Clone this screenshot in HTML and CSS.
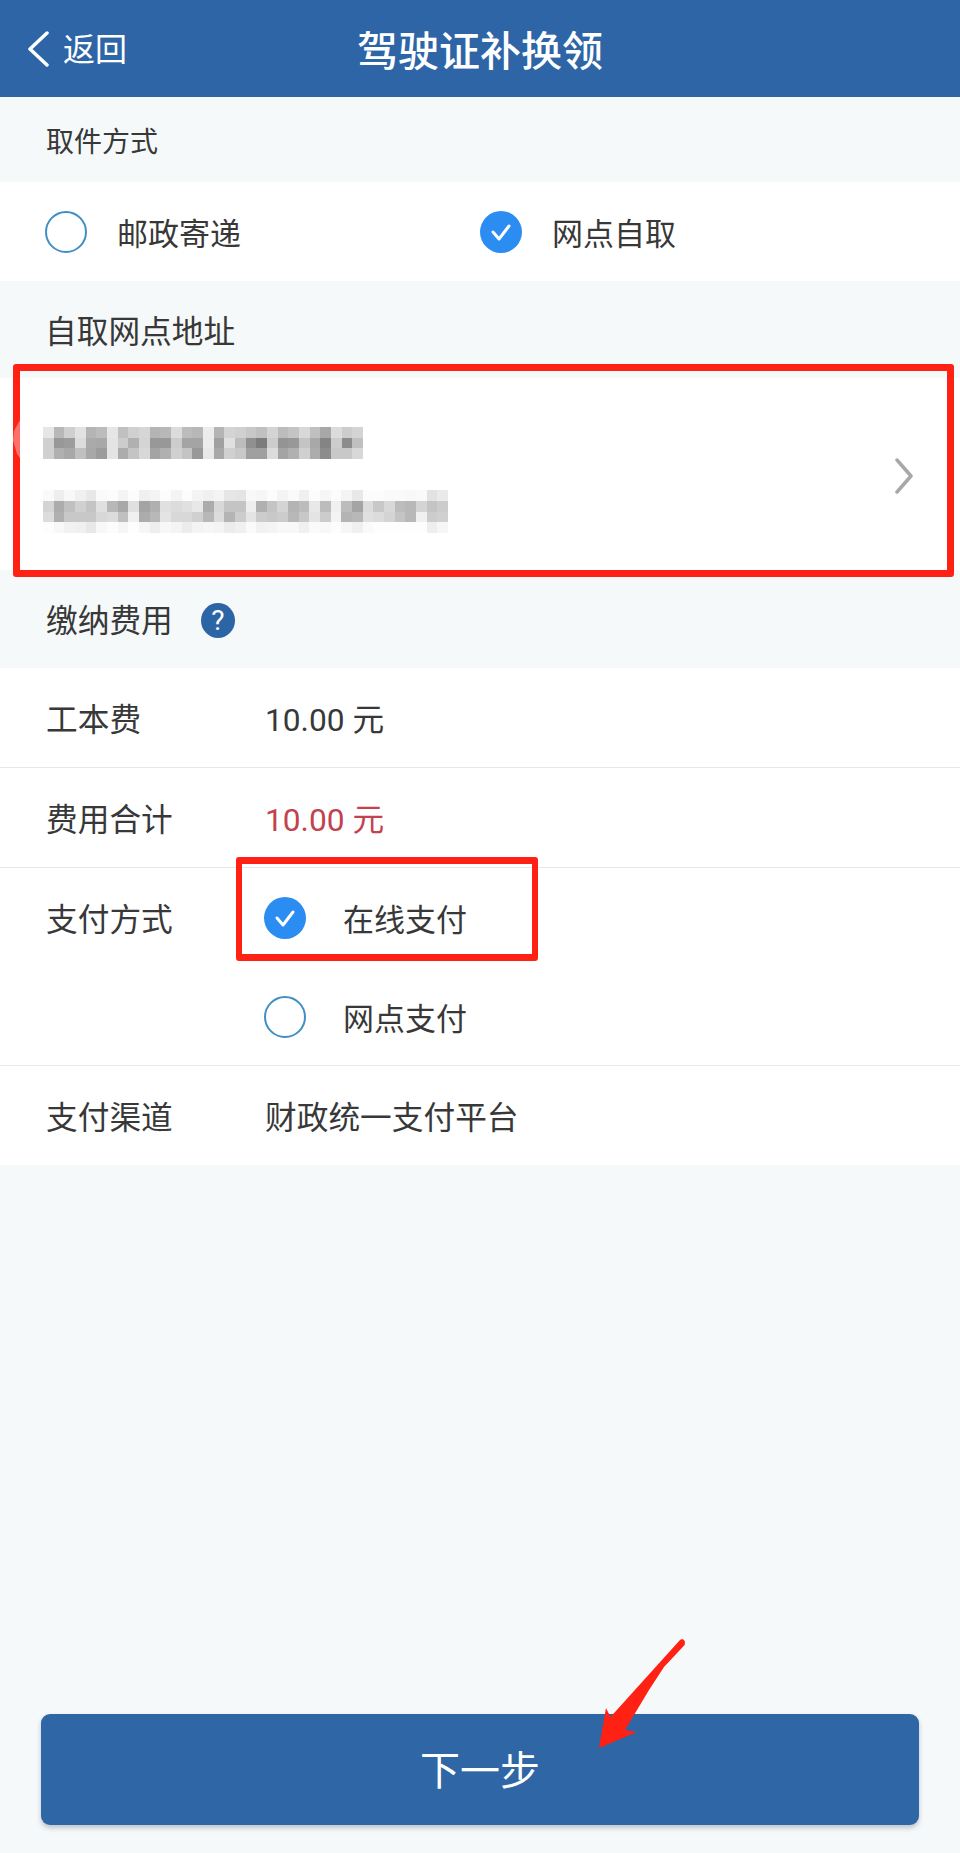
FILE: index.html
```html
<!DOCTYPE html>
<html lang="zh-CN">
<head>
<meta charset="utf-8">
<title>驾驶证补换领</title>
<link rel="stylesheet" href="styles.css">
</head>
<body>
<div class="page">
  <header class="topbar">
    <div class="back">
      <svg class="back-icon" viewBox="0 0 22 36"><path d="M20 2 3 18l17 16"/></svg>
      <span>返回</span>
    </div>
    <h1 class="title">驾驶证补换领</h1>
  </header>

  <div class="label label-pick"><span class="small">取件方式</span></div>
  <div class="pick-row">
    <div class="option pick-option">
      <span class="radio"></span><span>邮政寄递</span>
    </div>
    <div class="option pick-option">
      <span class="radio checked"><svg viewBox="0 0 42 42"><path d="M13 21l6 7 10-13"/></svg></span><span>网点自取</span>
    </div>
  </div>

  <div class="label label-addr"><span>自取网点地址</span></div>
  <div class="address">
    <div class="mosaic-col">
      <svg class="mosaic m1" viewBox="0 0 30 3">
        <rect x="0" y="0" fill="#e6e6e6"/><rect x="1" y="0" fill="#b8b8b8"/><rect x="2" y="0" fill="#cfcfcf"/><rect x="3" y="0" fill="#e2e2e2"/><rect x="4" y="0" fill="#b4b4b4"/><rect x="5" y="0" fill="#bcbcbc"/><rect x="6" y="0" fill="#e6e6e6"/><rect x="7" y="0" fill="#c0c0c0"/><rect x="8" y="0" fill="#d0d0d0"/><rect x="9" y="0" fill="#d6d6d6"/><rect x="10" y="0" fill="#b4b4b4"/><rect x="11" y="0" fill="#b8b8b8"/><rect x="12" y="0" fill="#dcdcdc"/><rect x="13" y="0" fill="#bcbcbc"/><rect x="14" y="0" fill="#b8b8b8"/><rect x="15" y="0" fill="#ececec"/><rect x="16" y="0" fill="#b4b4b4"/><rect x="17" y="0" fill="#d4d4d4"/><rect x="18" y="0" fill="#d0d0d0"/><rect x="19" y="0" fill="#c8c8c8"/><rect x="20" y="0" fill="#c0c0c0"/><rect x="21" y="0" fill="#d4d4d4"/><rect x="22" y="0" fill="#bcbcbc"/><rect x="23" y="0" fill="#c4c4c4"/><rect x="24" y="0" fill="#d8d8d8"/><rect x="25" y="0" fill="#c0c0c0"/><rect x="26" y="0" fill="#a8a8a8"/><rect x="27" y="0" fill="#dcdcdc"/><rect x="28" y="0" fill="#cccccc"/><rect x="29" y="0" fill="#d4d4d4"/>
        <rect x="0" y="1" fill="#d0d0d0"/><rect x="1" y="1" fill="#989898"/><rect x="2" y="1" fill="#9c9c9c"/><rect x="3" y="1" fill="#dcdcdc"/><rect x="4" y="1" fill="#aaaaaa"/><rect x="5" y="1" fill="#a8a8a8"/><rect x="6" y="1" fill="#e4e4e4"/><rect x="7" y="1" fill="#cccccc"/><rect x="8" y="1" fill="#b0b0b0"/><rect x="9" y="1" fill="#d4d4d4"/><rect x="10" y="1" fill="#989898"/><rect x="11" y="1" fill="#989898"/><rect x="12" y="1" fill="#cccccc"/><rect x="13" y="1" fill="#a4a4a4"/><rect x="14" y="1" fill="#a4a4a4"/><rect x="15" y="1" fill="#ececec"/><rect x="16" y="1" fill="#a0a0a0"/><rect x="17" y="1" fill="#e0e0e0"/><rect x="18" y="1" fill="#bcbcbc"/><rect x="19" y="1" fill="#909090"/><rect x="20" y="1" fill="#7c7c7c"/><rect x="21" y="1" fill="#cccccc"/><rect x="22" y="1" fill="#949494"/><rect x="23" y="1" fill="#989898"/><rect x="24" y="1" fill="#c4c4c4"/><rect x="25" y="1" fill="#a8a8a8"/><rect x="26" y="1" fill="#848484"/><rect x="27" y="1" fill="#cccccc"/><rect x="28" y="1" fill="#8c8c8c"/><rect x="29" y="1" fill="#c0c0c0"/>
        <rect x="0" y="2" fill="#d0d0d0"/><rect x="1" y="2" fill="#b0b0b0"/><rect x="2" y="2" fill="#a8a8a8"/><rect x="3" y="2" fill="#c0c0c0"/><rect x="4" y="2" fill="#a8a8a8"/><rect x="5" y="2" fill="#9c9c9c"/><rect x="6" y="2" fill="#e4e4e4"/><rect x="7" y="2" fill="#acacac"/><rect x="8" y="2" fill="#c4c4c4"/><rect x="9" y="2" fill="#d8d8d8"/><rect x="10" y="2" fill="#a4a4a4"/><rect x="11" y="2" fill="#b0b0b0"/><rect x="12" y="2" fill="#d0d0d0"/><rect x="13" y="2" fill="#c4c4c4"/><rect x="14" y="2" fill="#989898"/><rect x="15" y="2" fill="#e8e8e8"/><rect x="16" y="2" fill="#a8a8a8"/><rect x="17" y="2" fill="#d0d0d0"/><rect x="18" y="2" fill="#c8c8c8"/><rect x="19" y="2" fill="#a0a0a0"/><rect x="20" y="2" fill="#a0a0a0"/><rect x="21" y="2" fill="#dcdcdc"/><rect x="22" y="2" fill="#a4a4a4"/><rect x="23" y="2" fill="#b0b0b0"/><rect x="24" y="2" fill="#d0d0d0"/><rect x="25" y="2" fill="#acacac"/><rect x="26" y="2" fill="#8c8c8c"/><rect x="27" y="2" fill="#c8c8c8"/><rect x="28" y="2" fill="#c8c8c8"/><rect x="29" y="2" fill="#d8d8d8"/>
      </svg>
      <svg class="mosaic m2" viewBox="0 0 38 4">
        <rect x="0" y="0" fill="#fafafa"/><rect x="1" y="0" fill="#eeeeee"/><rect x="2" y="0" fill="#f8f8f8"/><rect x="3" y="0" fill="#f0f0f0"/><rect x="4" y="0" fill="#e8e8e8"/><rect x="5" y="0" fill="#fafafa"/><rect x="6" y="0" fill="#fcfcfc"/><rect x="7" y="0" fill="#f4f4f4"/><rect x="8" y="0" fill="#fcfcfc"/><rect x="9" y="0" fill="#f0f0f0"/><rect x="10" y="0" fill="#f4f4f4"/><rect x="11" y="0" fill="#fcfcfc"/><rect x="12" y="0" fill="#f4f4f4"/><rect x="13" y="0" fill="#fcfcfc"/><rect x="14" y="0" fill="#f4f4f4"/><rect x="15" y="0" fill="#f0f0f0"/><rect x="16" y="0" fill="#f4f4f4"/><rect x="17" y="0" fill="#e6e6e6"/><rect x="18" y="0" fill="#e4e4e4"/><rect x="19" y="0" fill="#f8f8f8"/><rect x="20" y="0" fill="#f6f6f6"/><rect x="21" y="0" fill="#fcfcfc"/><rect x="22" y="0" fill="#f4f4f4"/><rect x="23" y="0" fill="#fafafa"/><rect x="24" y="0" fill="#f0f0f0"/><rect x="25" y="0" fill="#fcfcfc"/><rect x="26" y="0" fill="#f6f6f6"/><rect x="27" y="0" fill="#fcfcfc"/><rect x="28" y="0" fill="#f4f4f4"/><rect x="29" y="0" fill="#e8e8e8"/><rect x="30" y="0" fill="#fcfcfc"/><rect x="31" y="0" fill="#fcfcfc"/><rect x="32" y="0" fill="#fafafa"/><rect x="33" y="0" fill="#fafafa"/><rect x="34" y="0" fill="#f8f8f8"/><rect x="35" y="0" fill="#fafafa"/><rect x="36" y="0" fill="#e2e2e2"/><rect x="37" y="0" fill="#eaeaea"/>
        <rect x="0" y="1" fill="#d4d4d4"/><rect x="1" y="1" fill="#acacac"/><rect x="2" y="1" fill="#c0c0c0"/><rect x="3" y="1" fill="#d0d0d0"/><rect x="4" y="1" fill="#c4c4c4"/><rect x="5" y="1" fill="#e0e0e0"/><rect x="6" y="1" fill="#b8b8b8"/><rect x="7" y="1" fill="#a8a8a8"/><rect x="8" y="1" fill="#e0e0e0"/><rect x="9" y="1" fill="#a4a4a4"/><rect x="10" y="1" fill="#b0b0b0"/><rect x="11" y="1" fill="#e0e0e0"/><rect x="12" y="1" fill="#dcdcdc"/><rect x="13" y="1" fill="#e0e0e0"/><rect x="14" y="1" fill="#e8e8e8"/><rect x="15" y="1" fill="#acacac"/><rect x="16" y="1" fill="#d8d8d8"/><rect x="17" y="1" fill="#c4c4c4"/><rect x="18" y="1" fill="#c4c4c4"/><rect x="19" y="1" fill="#eeeeee"/><rect x="20" y="1" fill="#b0b0b0"/><rect x="21" y="1" fill="#c4c4c4"/><rect x="22" y="1" fill="#d4d4d4"/><rect x="23" y="1" fill="#b4b4b4"/><rect x="24" y="1" fill="#bcbcbc"/><rect x="25" y="1" fill="#e8e8e8"/><rect x="26" y="1" fill="#bcbcbc"/><rect x="27" y="1" fill="#f0f0f0"/><rect x="28" y="1" fill="#bcbcbc"/><rect x="29" y="1" fill="#a4a4a4"/><rect x="30" y="1" fill="#dcdcdc"/><rect x="31" y="1" fill="#c8c8c8"/><rect x="32" y="1" fill="#d8d8d8"/><rect x="33" y="1" fill="#bcbcbc"/><rect x="34" y="1" fill="#b8b8b8"/><rect x="35" y="1" fill="#d4d4d4"/><rect x="36" y="1" fill="#c4c4c4"/><rect x="37" y="1" fill="#cccccc"/>
        <rect x="0" y="2" fill="#dcdcdc"/><rect x="1" y="2" fill="#b0b0b0"/><rect x="2" y="2" fill="#c8c8c8"/><rect x="3" y="2" fill="#c8c8c8"/><rect x="4" y="2" fill="#c8c8c8"/><rect x="5" y="2" fill="#d8d8d8"/><rect x="6" y="2" fill="#dcdcdc"/><rect x="7" y="2" fill="#c0c0c0"/><rect x="8" y="2" fill="#f0f0f0"/><rect x="9" y="2" fill="#acacac"/><rect x="10" y="2" fill="#b8b8b8"/><rect x="11" y="2" fill="#e4e4e4"/><rect x="12" y="2" fill="#d8d8d8"/><rect x="13" y="2" fill="#d8d8d8"/><rect x="14" y="2" fill="#d0d0d0"/><rect x="15" y="2" fill="#b8b8b8"/><rect x="16" y="2" fill="#dcdcdc"/><rect x="17" y="2" fill="#b4b4b4"/><rect x="18" y="2" fill="#cccccc"/><rect x="19" y="2" fill="#e4e4e4"/><rect x="20" y="2" fill="#cccccc"/><rect x="21" y="2" fill="#c8c8c8"/><rect x="22" y="2" fill="#cccccc"/><rect x="23" y="2" fill="#b8b8b8"/><rect x="24" y="2" fill="#c8c8c8"/><rect x="25" y="2" fill="#e4e4e4"/><rect x="26" y="2" fill="#cccccc"/><rect x="27" y="2" fill="#f4f4f4"/><rect x="28" y="2" fill="#b4b4b4"/><rect x="29" y="2" fill="#b8b8b8"/><rect x="30" y="2" fill="#e0e0e0"/><rect x="31" y="2" fill="#dcdcdc"/><rect x="32" y="2" fill="#d4d4d4"/><rect x="33" y="2" fill="#c4c4c4"/><rect x="34" y="2" fill="#b8b8b8"/><rect x="35" y="2" fill="#f0f0f0"/><rect x="36" y="2" fill="#cccccc"/><rect x="37" y="2" fill="#d0d0d0"/>
        <rect x="0" y="3" fill="#fdfdfd"/><rect x="1" y="3" fill="#f8f8f8"/><rect x="2" y="3" fill="#f2f2f2"/><rect x="3" y="3" fill="#f0f0f0"/><rect x="4" y="3" fill="#e8e8e8"/><rect x="5" y="3" fill="#f8f8f8"/><rect x="6" y="3" fill="#fcfcfc"/><rect x="7" y="3" fill="#f6f6f6"/><rect x="8" y="3" fill="#fdfdfd"/><rect x="9" y="3" fill="#f6f6f6"/><rect x="10" y="3" fill="#eeeeee"/><rect x="11" y="3" fill="#f8f8f8"/><rect x="12" y="3" fill="#f4f4f4"/><rect x="13" y="3" fill="#ececec"/><rect x="14" y="3" fill="#f4f4f4"/><rect x="15" y="3" fill="#f6f6f6"/><rect x="16" y="3" fill="#f4f4f4"/><rect x="17" y="3" fill="#ececec"/><rect x="18" y="3" fill="#f0f0f0"/><rect x="19" y="3" fill="#fafafa"/><rect x="20" y="3" fill="#f2f2f2"/><rect x="21" y="3" fill="#f4f4f4"/><rect x="22" y="3" fill="#f8f8f8"/><rect x="23" y="3" fill="#f8f8f8"/><rect x="24" y="3" fill="#f0f0f0"/><rect x="25" y="3" fill="#fafafa"/><rect x="26" y="3" fill="#f8f8f8"/><rect x="27" y="3" fill="#fdfdfd"/><rect x="28" y="3" fill="#f6f6f6"/><rect x="29" y="3" fill="#f0f0f0"/><rect x="30" y="3" fill="#fafafa"/><rect x="31" y="3" fill="#fdfdfd"/><rect x="32" y="3" fill="#fdfdfd"/><rect x="33" y="3" fill="#fdfdfd"/><rect x="34" y="3" fill="#fdfdfd"/><rect x="35" y="3" fill="#fdfdfd"/><rect x="36" y="3" fill="#eeeeee"/><rect x="37" y="3" fill="#f6f6f6"/>
      </svg>
    </div>
    <svg class="chevron" viewBox="0 0 20 36"><path d="M3 2 17 18 3 34"/></svg>
  </div>

  <div class="label label-fee">
    <span>缴纳费用</span>
    <span class="help">?</span>
  </div>
  <div class="fees">
    <div class="fee-row">
      <span class="fee-key">工本费</span>
      <span>10.00 元</span>
    </div>
    <div class="fee-row">
      <span class="fee-key">费用合计</span>
      <span class="total">10.00 元</span>
    </div>
    <div class="fee-row pay-row">
      <span class="fee-key pay-key">支付方式</span>
      <div class="pay-options">
        <div class="option pay-option">
          <span class="radio checked"><svg viewBox="0 0 42 42"><path d="M13 21l6 7 10-13"/></svg></span><span>在线支付</span>
        </div>
        <div class="option pay-option">
          <span class="radio"></span><span>网点支付</span>
        </div>
      </div>
    </div>
    <div class="fee-row">
      <span class="fee-key">支付渠道</span>
      <span>财政统一支付平台</span>
    </div>
  </div>

  <div class="footer">
    <button class="next" type="button">下一步</button>
  </div>

  <div class="mark mark-addr"></div>
  <svg class="nick" viewBox="0 0 10 38"><path d="M8 0 2 11l-1 9 4 14 3 4z"/></svg>
  <div class="mark mark-pay"></div>
  <svg class="arrow" viewBox="0 0 92 114"><path d="M85 1Q89 2 87.600 7L67 29 52 52 28 92 40 94 2 110 9 70 13.500 79 83 2Z"/></svg>
</div>
</body>
</html>
```
FILE: styles.css
```css
* { box-sizing: border-box; }
html, body { margin: 0; padding: 0; }
body {
  font-family: Roboto, "Noto Sans CJK SC", "Noto Sans", sans-serif;
  color: #383838;
  background: #f5f9fa;
}
.page {
  position: relative;
  width: 960px;
  height: 1853px;
  display: flex;
  flex-direction: column;
  font-size: 31.700px;
  line-height: 40px;
  background: #f5f9fa;
  overflow: hidden;
}
.topbar {
  position: relative;
  flex: none;
  height: 97px;
  background: #2d65a6;
  color: #fff;
  display: flex;
  align-items: center;
  justify-content: center;
}
.back {
  position: absolute;
  left: 27px;
  top: 30px;
  display: flex;
  align-items: center;
  gap: 14px;
  font-size: 32px;
}
.back-icon { width: 22px; height: 38px; margin-top: -2px; }
.back-icon path { fill: none; stroke: #fff; stroke-width: 3.5; stroke-linecap: round; stroke-linejoin: round; }
.title {
  margin: 0;
  font-size: 41px;
  font-weight: 500;
  line-height: 50px;
  padding-top: 6px;
}
.label {
  flex: none;
  display: flex;
  align-items: center;
  padding-left: 46px;
  padding-top: 6px;
}
.label-pick { height: 85px; }
.small { font-size: 28px; }
.label-addr { height: 97px; padding-left: 45px; }
.label-fee { height: 98px; gap: 28px; }
.pick-row {
  flex: none;
  height: 99px;
  background: #fff;
  display: flex;
  padding-left: 45px;
}
.option { display: flex; align-items: center; font-size: 31px; }
.option > span:last-child { padding-top: 6px; }
.pick-option { width: 435px; gap: 30px; }
.radio {
  flex: none;
  width: 42px;
  height: 42px;
  border-radius: 50%;
  border: 2.5px solid #3f8fc4;
  background: #fff;
}
.radio.checked {
  border: 0;
  background: #2b8cf2;
}
.radio svg { display: block; width: 42px; height: 42px; }
.radio path { fill: none; stroke: #fff; stroke-width: 3; stroke-linecap: round; stroke-linejoin: round; }
.address {
  flex: none;
  height: 192px;
  background: #fff;
  display: flex;
  justify-content: space-between;
  align-items: center;
  padding: 0 46px 0 43px;
}
.mosaic-col {
  display: flex;
  flex-direction: column;
  gap: 31px;
  padding-top: 12px;
}
.mosaic { display: block; shape-rendering: crispEdges; }
.mosaic rect { width: 1px; height: 1px; }
.m1 { width: 320px; height: 32px; }
.m2 { width: 405px; height: 43px; }
.chevron { width: 20px; height: 36px; margin-top: 4px; }
.chevron path { fill: none; stroke: #a8a8a8; stroke-width: 3.5; stroke-linecap: round; stroke-linejoin: round; }
.help {
  width: 34px;
  height: 35px;
  border-radius: 50%;
  background: #2c65a6;
  color: #fff;
  font-size: 28px;
  font-weight: 400;
  line-height: 35px;
  text-align: center;
  margin-top: -4px;
}
.fees { flex: none; background: #fff; }
.fee-row {
  height: 100px;
  display: flex;
  align-items: center;
  padding-left: 46px;
  border-bottom: 1.5px solid #e6e8ea;
}
.fee-row:last-child { height: 99px; border-bottom: 0; }
.fee-row > span { padding-top: 6px; }
.fee-key { width: 219px; flex: none; }
.total { color: #c2434f; }
.pay-row {
  height: 198px;
  align-items: flex-start;
}
.fee-row > .pay-key { padding-top: 33px; }
.pay-option { height: 99px; gap: 37px; margin-left: -1px; }
.footer {
  margin-top: auto;
  padding: 0 41px 28px;
}
.next {
  display: block;
  width: 100%;
  height: 111px;
  padding: 5px 0 0;
  border: 0;
  border-radius: 9px;
  background: #2e66a6;
  color: #fff;
  font: inherit;
  font-size: 40px;
  box-shadow: 0 3px 5px rgba(60, 80, 100, .3);
}
.mark {
  position: absolute;
  border: 7px solid #ff2113;
  border-radius: 3px;
}
.mark-addr { left: 13px; top: 364px; width: 941px; height: 213px; }
.mark-pay { left: 236px; top: 857px; width: 302px; height: 104px; border-width: 7px 6px; }
.nick { position: absolute; left: 12px; top: 420px; width: 10px; height: 38px; }
.nick path { fill: #ff7068; }
.arrow { position: absolute; left: 597px; top: 1638px; width: 92px; height: 114px; }
.arrow path { fill: #ff2113; }
```
